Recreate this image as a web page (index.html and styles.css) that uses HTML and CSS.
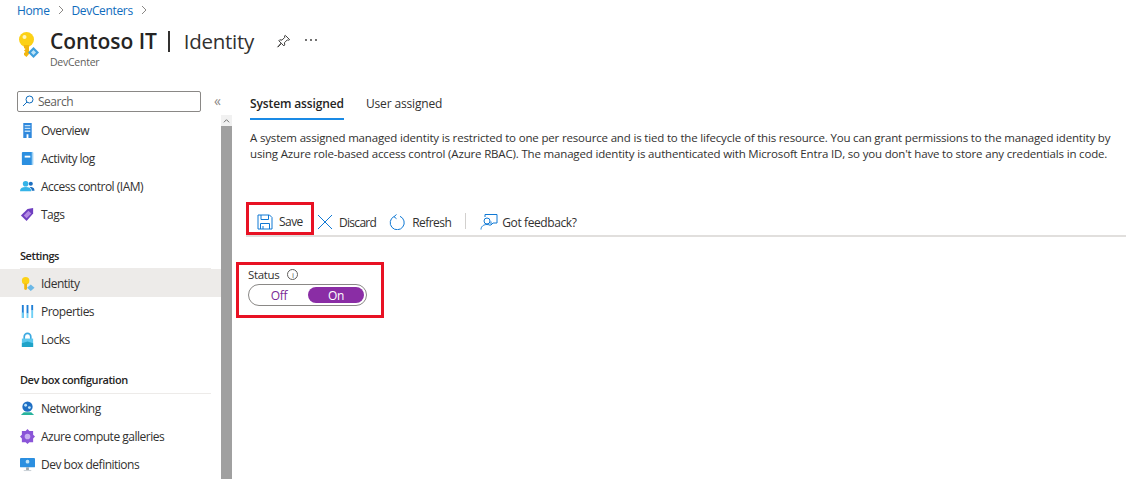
FILE: index.html
```html
<!DOCTYPE html>
<html lang="en">
<head>
<meta charset="utf-8">
<title>Contoso IT | Identity</title>
<link rel="stylesheet" href="styles.css">
</head>
<body>
<nav class="crumbs"><a>Home</a><svg class="chev" viewBox="0 0 8 10"><path d="M2 1l4 4-4 4"/></svg><a>DevCenters</a><svg class="chev" viewBox="0 0 8 10"><path d="M2 1l4 4-4 4"/></svg></nav>
<header class="head">
  <svg class="logo" viewBox="0 0 20 27">
    <circle cx="7.500" cy="7.500" r="7.500" fill="#fcd116"/><circle cx="5.500" cy="5" r="2" fill="#fff6c0"/>
    <path d="M5 13h5v9l-2.500 3L5 23v-2l1.500-1L5 18.500l1.500-1.500L5 16z" fill="#f2b70f"/>
    <path d="M14.500 15l5.500 5.500-5.500 5.500L9 20.500z" fill="#3f9fdc"/><path d="M14.500 18l2.500 2.500-2.500 2.500-2.500-2.500z" fill="#bfe4f8"/>
  </svg>
  <div class="titles">
    <div class="titleline"><h1>Contoso IT</h1><span class="bar"></span><span class="blade">Identity</span>
      <svg class="pin" viewBox="0 0 16 16"><path d="M10 1.500l4.500 4.500-1 .6-1.500-.3-3 3 .3 2.400-1 1-2.500-2.700-4 4 3.700-4.300-2.500-2.500 1-1 2.400.3 3-3-.3-1.500z"/></svg>
      <svg class="more" viewBox="0 0 14 4"><circle cx="2" cy="2" r=".9"/><circle cx="7" cy="2" r=".9"/><circle cx="12" cy="2" r=".9"/></svg></div>
    <div class="sub">DevCenter</div>
  </div>
</header>
<div class="layout">
  <aside class="side">
    <div class="searchrow">
      <div class="search"><svg viewBox="0 0 12 12"><circle cx="7.500" cy="4.500" r="3.500"/><path d="M5 7l-4 4"/></svg><span>Search</span></div>
      <span class="collapse">«</span>
    </div>
    <div class="navwrap">
      <div class="nav">
        <div class="item"><svg viewBox="0 0 16 16"><path fill="#2f88dc" d="M3.500 0h9v16h-9z"/><path fill="#bfe0f8" d="M5 2h6v1.500H5zM5 5h6v1.500H5zM5 8h6v1.500H5z"/><path fill="#fff" d="M7 12h2v4H7z"/></svg>Overview</div>
        <div class="item"><svg viewBox="0 0 16 16"><rect x="2" y="1" width="12" height="14" rx="1" fill="#2b8fe0"/><path fill="#9fd2f5" d="M12.500 1H14v14h-1.500z"/><path fill="#fff" d="M5 5h6v2H5z"/></svg>Activity log</div>
        <div class="item"><svg viewBox="0 0 16 16"><circle cx="6" cy="5" r="3" fill="#35b4e8"/><path fill="#35b4e8" d="M0 13c0-3 2-4.500 6-4.500s6 1.500 6 4.500z"/><circle cx="11.500" cy="5" r="2.200" fill="#1c6fc0"/><path fill="#1c6fc0" d="M10 8.500c3 0 5.500.5 5.500 4h-3c0-2-1-3-2.500-4z"/></svg>Access control (IAM)</div>
        <div class="item"><svg viewBox="0 0 16 16"><path fill="#6f3fc0" d="M1 9l7-7 6-1v6l-7 8z"/><path fill="#b48ae4" d="M4 9l5-5 3 3-5 5z"/></svg>Tags</div>
        <div class="group">Settings</div>
        <div class="item on"><svg viewBox="0 0 16 16"><circle cx="6" cy="5" r="4" fill="#fcd116"/><path fill="#f2b70f" d="M4.500 8h3v6l-1.500 1-1.500-1z"/><path d="M11.500 9l4 3.500-4 3.500-4-3.500z" fill="#6cb8e6"/></svg>Identity</div>
        <div class="item"><svg viewBox="0 0 16 16"><path fill="#1f7fd6" d="M2 1h2v14H2zM7 1h2v9H7zM12 1h2v6h-2z"/><path fill="#6fd0f5" d="M2 9h2v6H2zM7 10h2v5H7zM12 7h2v8h-2z"/></svg>Properties</div>
        <div class="item"><svg viewBox="0 0 16 16"><path fill="none" stroke="#3aa8e0" stroke-width="1.800" d="M4.500 8V5a3.500 3.500 0 017 0v3"/><path fill="#5cc8ee" d="M2 7h12v9H2z"/><path fill="#1fa3c8" d="M2 12l6-2 6 2v4H2z"/></svg>Locks</div>
        <div class="group tall">Dev box configuration</div>
        <div class="item"><svg viewBox="0 0 16 16"><circle cx="8" cy="6" r="5.500" fill="#1f6fc4"/><circle cx="6" cy="4.500" r="1.500" fill="#bfe4f8"/><circle cx="10" cy="7" r="1.500" fill="#bfe4f8"/><path fill="#27b39c" d="M1 15l3-3h8l3 3z"/></svg>Networking</div>
        <div class="item"><svg viewBox="0 0 16 16"><path fill="#8a55d8" d="M8 0l2 2h4v4l2 2-2 2v4h-4l-2 2-2-2H2v-4L0 8l2-2V2h4z"/><circle cx="8" cy="8" r="3" fill="#c8b0f0"/></svg>Azure compute galleries</div>
        <div class="item"><svg viewBox="0 0 16 16"><rect x="0" y="1" width="16" height="10" rx="1" fill="#2b8fe0"/><circle cx="8" cy="5" r="2" fill="#bfe4f8"/><path fill="#9aa5ad" d="M6.500 11h3v3h-3z"/><path fill="#c4ccd2" d="M4 14h8v1H4z"/></svg>Dev box definitions</div>
      </div>
      <div class="scroll"><div class="thumbcap"><svg viewBox="0 0 8 6"><path d="M1 4.500L4 1.500l3 3"/></svg></div></div>
    </div>
  </aside>
  <main class="main">
    <div class="tabs"><span class="tab active">System assigned</span><span class="tab">User assigned</span></div>
    <p class="desc">A system assigned managed identity is restricted to one per resource and is tied to the lifecycle of this resource. You can grant permissions to the managed identity by using Azure role-based access control (Azure RBAC). The managed identity is authenticated with Microsoft Entra ID, so you don't have to store any credentials in code.</p>
    <div class="toolbar">
      <button class="tool mark-save"><svg viewBox="0 0 16 16"><path d="M1 1h11.500L15 3.500V15H1zM4 1v4.500h7.500V1M3.500 15V9.500h9V15M6 15v-3"/></svg>Save</button>
      <button class="tool discard"><svg viewBox="0 0 16 16"><path d="M1 1l14 14M15 1L1 15"/></svg>Discard</button>
      <button class="tool refresh"><svg viewBox="0 0 16 16"><path d="M5 2.500a7 7 0 106-.2M7.500 .5L5 2.700l2.500 2"/></svg>Refresh</button>
      <span class="sep"></span>
      <button class="tool feedback"><svg viewBox="0 0 18 16"><circle cx="7" cy="7" r="3"/><path d="M1 15.500c0-3 2.500-5 6-5 1.500 0 2.500.3 3.500 1M5 3V.5h12V9h-4l-2 2V7.500"/></svg>Got feedback?</button>
    </div>
    <div class="statusbox">
      <div class="statuslabel">Status<span class="info">i</span></div>
      <div class="toggle"><span class="opt">Off</span><span class="opt sel">On</span></div>
    </div>
  </main>
</div>
</body>
</html>
```
FILE: styles.css
```css
* { box-sizing: border-box; }
html, body { margin: 0; height: 479px; overflow: hidden; background: #fff; }
body { font-family: "Open Sans", "Noto Sans", sans-serif; font-size: 12px; color: #323130; width: 1126px; }
.crumbs { display: flex; align-items: center; height: 20px; padding-left: 17px; font-size: 12px; letter-spacing: -.35px; color: #0f6cbd; }
.chev { width: 8px; height: 10px; margin: 0 7px 0 7px; fill: none; stroke: #8a8886; stroke-width: 1; }
.head { display: flex; height: 53px; padding: 8px 0 0 19px; }
.logo { width: 20px; height: 27px; margin-top: 4px; flex: none; }
.titles { margin-left: 11px; }
.titleline { display: flex; align-items: center; height: 26px; }
h1 { margin: 0; font-size: 21px; font-weight: 600; letter-spacing: -.05px; color: #252423; }
.bar { width: 2px; height: 21px; background: #323130; margin: 0 14px 0 11px; }
.blade { font-size: 20.500px; letter-spacing: -.3px; color: #323130; }
.pin { width: 15px; height: 15px; margin-left: 22px; fill: none; stroke: #323130; stroke-width: 1; }
.more { width: 14px; height: 4px; margin: 0 0 2px 13px; fill: #323130; }
.sub { font-size: 10.500px; letter-spacing: -.25px; color: #605e5c; margin-top: 1px; }
.layout { display: flex; height: 406px; }
.side { width: 232px; flex: none; display: flex; flex-direction: column; padding-top: 17px; }
.searchrow { display: flex; align-items: center; padding-left: 17px; height: 22px; }
.search { display: flex; align-items: center; width: 184px; height: 21px; border: 1px solid #8a8886; border-radius: 2px; padding-left: 4px; color: #605e5c; letter-spacing: -.5px; }
.search svg { width: 12px; height: 12px; margin-right: 4px; fill: none; stroke: #0f6cbd; stroke-width: 1; }
.collapse { margin-left: 13px; font-size: 14px; color: #8a8886; line-height: 1; }
.navwrap { display: flex; flex: 1; min-height: 0; margin-top: 3px; }
.nav { width: 221px; flex: none; padding-top: 1px; }
.item { display: flex; align-items: center; height: 28px; padding-left: 20px; letter-spacing: -.5px; color: #323130; font-size: 12px; }
.item svg { width: 15px; height: 15px; margin-right: 6px; flex: none; }
.item.on { background: #edebe9; }
.group { display: flex; align-items: flex-end; height: 41px; margin: 0 10px 0 20px; padding-bottom: 5px; font-size: 11px; font-weight: 600; letter-spacing: -.45px; color: #252423; border-bottom: 1px solid #edebe9; }
.group.tall { height: 41px; padding-bottom: 6px; }
.scroll { width: 11px; flex: none; background: #a0a0a0; }
.thumbcap { height: 11px; background: #f1f1f1; display: flex; align-items: center; justify-content: center; }
.thumbcap svg { width: 7px; height: 6px; fill: none; stroke: #606060; stroke-width: 1; }
.main { flex: 1; min-width: 0; padding: 19px 0 0 18px; }
.tabs { display: flex; gap: 22px; height: 28px; }
.tab { height: 28px; font-size: 12px; line-height: 24px; letter-spacing: -.15px; color: #323130; }
.tab.active { font-weight: 600; letter-spacing: -.12px; border-bottom: 2px solid #1a8ae5; color: #252423; }
.desc { margin: 10px 0 0; width: 868px; font-size: 11.500px; line-height: 16px; letter-spacing: -.17px; color: #323130; }
.toolbar { display: flex; align-items: center; height: 34px; margin-top: 41px; border-bottom: 2px solid #e1dfdd; padding: 0 0 1px; margin-left: -4px; }
.tool { display: flex; align-items: center; height: 32px; padding: 7px 0 0; border: 0; background: none; font: inherit; letter-spacing: -.55px; color: #323130; white-space: nowrap; }
.tool svg { width: 16px; height: 16px; margin: 0 6px 0 0; fill: none; stroke: #0f78d4; stroke-width: 1; }
.mark-save { border: 3px solid #e81123; height: 33px; width: 68px; padding: 6px 0 0 8px; }
.discard { margin-left: 3px; letter-spacing: -.7px; }
.refresh { margin-left: 13px; }
.refresh svg { margin-right: 7px; }
.sep { width: 1px; height: 16px; background: #d2d0ce; margin: 5px 14px 0; }
.feedback { letter-spacing: -.4px; }
.feedback svg { width: 18px; margin-right: 4px; }
.statusbox { width: 148px; height: 56px; margin: 25px 0 0 -14px; border: 3px solid #e81123; padding: 1px 0 0 9px; }
.statuslabel { display: flex; align-items: center; height: 16px; letter-spacing: -.33px; color: #323130; font-size: 11.500px; }
.info { display: flex; width: 11px; height: 11px; margin-left: 8px; border: 1px solid #605e5c; border-radius: 50%; font-size: 8px; line-height: 9px; justify-content: center; letter-spacing: 0; color: #605e5c; }
.toggle { display: flex; align-items: center; width: 119px; height: 22px; margin-top: 2px; border: 1px solid #8a8886; border-radius: 11px; padding: 2px; }
.opt { display: flex; align-items: center; justify-content: center; width: 57px; height: 16px; color: #7a2a95; font-size: 12px; letter-spacing: -.3px; }
.opt.sel { margin-left: 1px; background: #8a2da5; color: #fff; border-radius: 8px; }
```
